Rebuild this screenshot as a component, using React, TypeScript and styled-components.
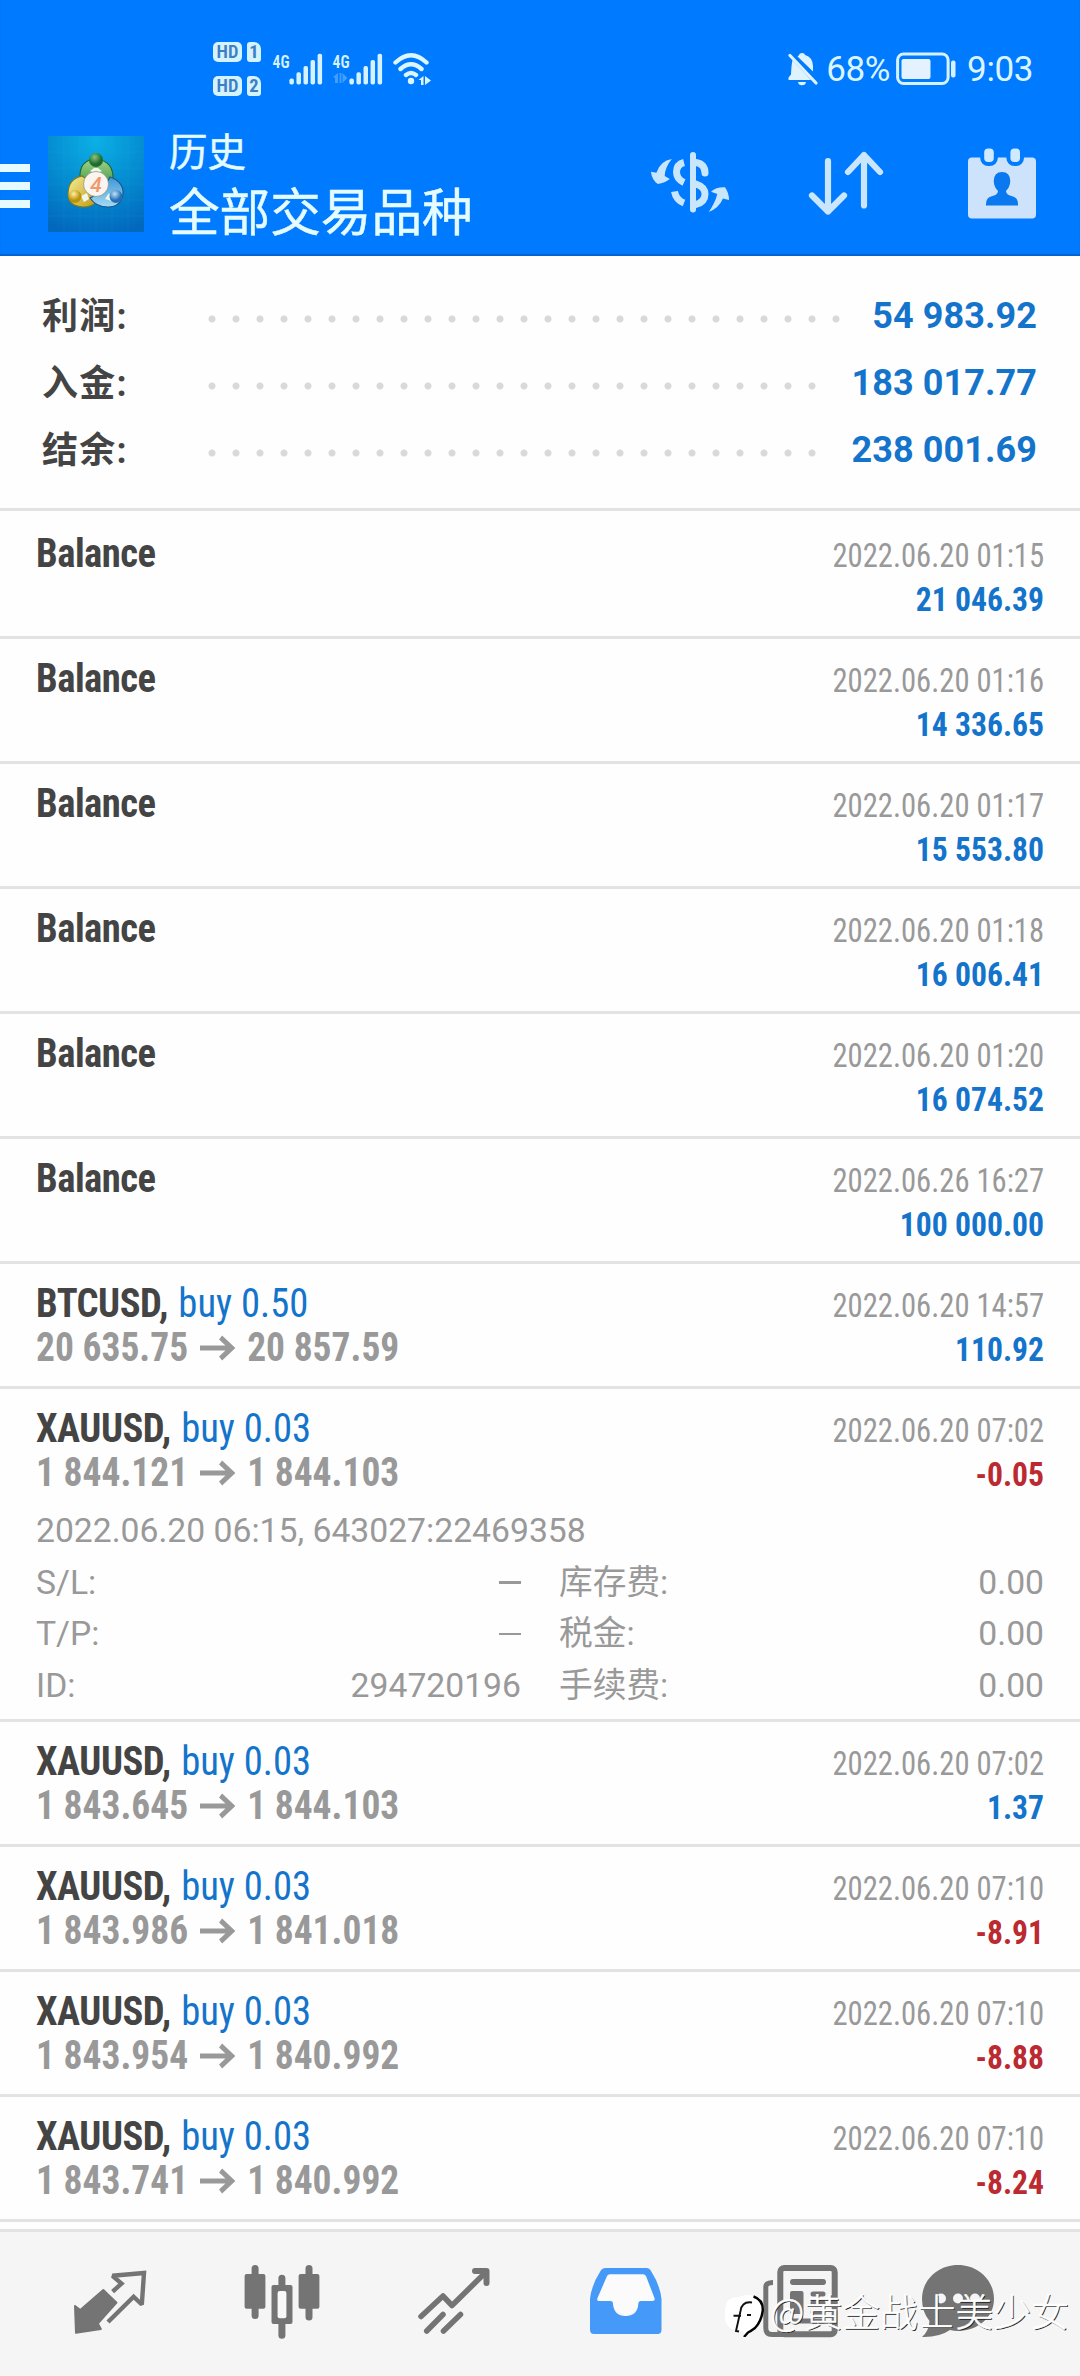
import React from "react";
import styled, { createGlobalStyle } from "styled-components";

const BLUE = "#1474cb";
const RED = "#bb2a30";
const ICE = "#c9e6fd";
const NAV = "#747474";
const CONDENSED = `"Roboto Condensed", Roboto, "Noto Sans CJK SC", sans-serif`;

const GlobalStyle = createGlobalStyle`
  *, *::before, *::after { box-sizing: border-box; }
  body {
    margin: 0;
    background: #fefefe;
    font-family: Roboto, "Noto Sans CJK SC", sans-serif;
  }
  svg { display: block; flex: none; }
`;

const Screen = styled.div`
  position: relative;
  width: 1080px;
  height: 2376px;
  overflow: hidden;
  display: flex;
  flex-direction: column;
  background: #fefefe;
`;

/* ---------- header ---------- */

const Header = styled.header`
  height: 256px;
  flex: none;
  background: #007aff;
  box-shadow: inset 0 -2px 1px rgba(0, 60, 130, 0.35);
`;

const StatusBar = styled.div`
  height: 120px;
  padding: 17px 47px 0 213px;
  display: flex;
  align-items: center;
  color: #dcf4ff;
`;

const SimBadges = styled.div`
  display: grid;
  grid-template-columns: 29px 14px;
  gap: 14px 5px;
  margin-right: 11px;
`;

const Badge = styled.span<{ $sim?: boolean }>`
  height: 20px;
  border-radius: ${(p) => (p.$sim ? "3px 7px 3px 3px" : "5px")};
  background: #d5f2ff;
  color: #3b7fc4;
  font: ${(p) => (p.$sim ? 700 : 600)} 18.5px/20px ${CONDENSED};
  text-align: center;
`;

const Signals = styled.div`
  display: flex;
  gap: 6px;
  margin-right: auto;
`;

const StatusText = styled.span<{ $gap: number }>`
  font-size: 35px;
  line-height: 40px;
  letter-spacing: -0.4px;
  margin-left: ${(p) => p.$gap}px;
  padding-top: 3px;
`;

const BatterySlot = styled.div`
  margin-left: 6px;
`;

const AppBar = styled.div`
  height: 128px;
  padding-right: 40px;
  display: flex;
  align-items: center;
`;

const MenuButton = styled.div`
  width: 30px;
  height: 44px;
  margin: 4px 18px 0 0;
  display: flex;
  flex-direction: column;
  justify-content: space-between;
`;

const MenuLine = styled.i`
  height: 8px;
  background: #e6fbff;
`;

const Titles = styled.div`
  display: flex;
  flex-direction: column;
  gap: 8px;
  margin: 6px auto 0 25px;
  color: #e4fbff;
  -webkit-text-stroke: 0.5px #e4fbff;
`;

const Caption = styled.div`
  font-size: 38.5px;
  line-height: 46px;
`;

const Title = styled.div`
  font-size: 50.6px;
  line-height: 60px;
`;

const Actions = styled.div`
  display: flex;
  align-items: center;
`;

const Action = styled.div<{ $w: number; $gap?: number }>`
  width: ${(p) => p.$w}px;
  margin-left: ${(p) => p.$gap || 0}px;
`;

/* ---------- summary ---------- */

const Summary = styled.section`
  height: 255px;
  flex: none;
  margin-bottom: 3px;
  padding: 27px 43px 0 42px;
  border-bottom: 3px solid #e3e3e3;
`;

const SummaryRow = styled.div`
  height: 67px;
  display: flex;
  align-items: center;
  font-size: 36px;
  line-height: 67px;
  font-weight: 700;
`;

const SummaryLabel = styled.span`
  width: 158px;
  padding-top: 2px;
  color: #444;
  letter-spacing: 1.2px;
`;

const Dots = styled.span<{ $count: number }>`
  width: ${(p) => p.$count * 24}px;
  height: 8px;
  margin-top: 5px;
  background: radial-gradient(circle at 50% 50%, #d9d9d9 3px, transparent 4px) 0 0 / 24px 8px repeat-x;
`;

const SummaryValue = styled.span`
  margin-left: auto;
  color: ${BLUE};
  letter-spacing: 0.1px;
`;

/* ---------- history list ---------- */

const Deal = styled.article<{ $open?: boolean }>`
  height: ${(p) => (p.$open ? 333 : 125)}px;
  flex: none;
  padding: 18px 36px 0;
  border-bottom: 3px solid #e3e3e3;
`;

const DealHead = styled.div`
  display: flex;
  justify-content: space-between;
  font-family: ${CONDENSED};
  line-height: 44px;
`;

const Symbol = styled.div`
  font-size: 40px;
  font-weight: 700;
  color: #444;
  letter-spacing: -0.5px;
  transform: scaleX(0.965);
  transform-origin: left;
`;

const Side = styled.span`
  margin-left: 2px;
  font-weight: 400;
  color: ${BLUE};
  letter-spacing: 0;
`;

const Prices = styled.div`
  display: flex;
  align-items: center;
  gap: 12px;
  font-size: 40px;
  font-weight: 700;
  color: #999;
  transform: scaleX(0.937);
  transform-origin: left;
`;

const Result = styled.div`
  margin-top: 1px;
  text-align: right;
`;

const Time = styled.div`
  font-size: 34px;
  color: #999;
  transform: scaleX(0.9);
  transform-origin: right;
`;

const Amount = styled.div<{ $loss: boolean }>`
  font-size: 34px;
  font-weight: 700;
  color: ${(p) => (p.$loss ? RED : BLUE)};
  transform: scaleX(0.93);
  transform-origin: right;
`;

const Details = styled.div`
  margin-top: 9px;
  display: grid;
  grid-template-columns: 1fr 1fr;
  column-gap: 38px;
  font-size: 33.7px;
  line-height: 51.6px;
  color: #999;
`;

const Ticket = styled.div`
  grid-column: 1 / -1;
`;

const Field = styled.div`
  display: flex;
  align-items: center;
  justify-content: space-between;
`;

const Dash = styled.i`
  width: 22px;
  height: 2.5px;
  background: #999;
`;

/* ---------- bottom navigation ---------- */

const NavBar = styled.nav`
  height: 147px;
  flex: none;
  margin-top: auto;
  padding: 33px 24px 0;
  border-top: 3px solid #e3e3e3;
  background: #f5f5f5;
  display: grid;
  grid-template-columns: repeat(6, 1fr);
  justify-items: center;
`;

const NavItem = styled.div<{ $shift?: number }>`
  margin-left: ${(p) => p.$shift || 0}px;
`;

const Watermark = styled.div`
  position: absolute;
  left: 724px;
  top: 2285px;
  display: flex;
  align-items: center;
  gap: 4px;
  font: 300 37.8px/56px "Noto Sans CJK SC", sans-serif;
  color: #fff;
  text-shadow: 1px 1px 0 #222;
  -webkit-text-stroke: 0.5px #fff;
  white-space: nowrap;
`;

const WatermarkText = styled.span`
  margin-top: -3px;
`;

/* ---------- icons ---------- */

const Cellular = ({ data }: { data?: boolean }) => (
  <svg width="54" height="34" viewBox="0 0 54 34" fill="#d5f2ff">
    <text x="0.6" y="15.5" fontFamily="Roboto Condensed" fontSize="18.5" fontWeight="600" textLength="17" lengthAdjust="spacingAndGlyphs">4G</text>
    {data && <path d="M1 25l5-4v10h-3v-5zM7.500 21h2v10h-2zM10.500 21l5 5-5 5z" opacity="0.3" />}
    {[0, 1, 2, 3, 4].map((i) => (
      <rect key={i} x={17.4 + i * 7.05} y={26.500 - i * 6.2} width="4.5" height={6 + i * 6.2} rx="1.8" />
    ))}
  </svg>
);

const Wifi = () => (
  <svg width="40" height="34" viewBox="0 0 40 34" fill="none" stroke="#dcf6ff" strokeWidth="4.4" strokeLinecap="round">
    <path d="M3.5 10.5Q19 -4 34.500 10.5M8.500 17Q19 7.500 29.500 17M14 23Q19 19 24 23" />
    <circle cx="19" cy="29" r="3.2" fill="#dcf6ff" stroke="none" />
    <path d="M26.500 28l5-4v9h-2.500v-5zM33 24l6 4.500-6 4.500z" fill="#dcf6ff" stroke="none" />
  </svg>
);

const BellOff = () => (
  <svg width="31" height="34" viewBox="0 0 31 34" fill="#dff3ff">
    <path d="M10.500 4.500Q11.500 3.500 12 3Q12.500 1 15 1Q17.500 1 18.200 3Q25.500 5 26 14V19.500z" />
    <path d="M5.500 8L24 28H1.500V25.500L4 22.500Q4.500 12 5.500 8z" />
    <path d="M11 30h8q-.5 3.200-4 3.200t-4-3.200z" />
    <path d="M3 3.500L29 31" stroke="#dff3ff" strokeWidth="3.200" strokeLinecap="round" />
  </svg>
);

const Battery = () => (
  <svg width="60" height="34" viewBox="0 0 60 34">
    <rect x="1.600" y="2" width="50.500" height="29.500" rx="6" fill="none" stroke="#d5f2ff" strokeWidth="3" />
    <rect x="5.500" y="7" width="29" height="20" rx="2" fill="#e4f2ff" />
    <rect x="55" y="8.500" width="4.500" height="17" rx="2" fill="#d5f2ff" />
  </svg>
);

const Logo = () => (
  <svg width="96" height="96" viewBox="0 0 96 96">
    <defs>
      <radialGradient id="sky" cx="50%" cy="5%" r="100%">
        <stop offset="0" stopColor="#0bb0e6" />
        <stop offset="0.55" stopColor="#0489cf" />
        <stop offset="1" stopColor="#0268bd" />
      </radialGradient>
      <linearGradient id="leaf" x2="0" y2="1"><stop stopColor="#a3d38c" /><stop offset="1" stopColor="#278a2c" /></linearGradient>
      <linearGradient id="gold" x2="1" y2="1"><stop stopColor="#f6ee9a" /><stop offset="1" stopColor="#c39a10" /></linearGradient>
      <linearGradient id="aqua" x2="0" y2="1"><stop stopColor="#3e96d6" /><stop offset="1" stopColor="#a5daf5" /></linearGradient>
      <radialGradient id="ballG" cx="40%" cy="30%"><stop stopColor="#8cc47c" /><stop offset="1" stopColor="#1d6b2e" /></radialGradient>
      <radialGradient id="ballY" cx="40%" cy="30%"><stop stopColor="#fff2a0" /><stop offset="1" stopColor="#b9930f" /></radialGradient>
      <radialGradient id="ballB" cx="40%" cy="30%"><stop stopColor="#bfe4fa" /><stop offset="1" stopColor="#246fb5" /></radialGradient>
    </defs>
    <rect width="96" height="96" fill="url(#sky)" />
    <path d="M0 16H96M0 32H96M0 48H96M0 64H96M0 80H96M16 0V96M32 0V96M48 0V96M64 0V96M80 0V96" stroke="#5fd0f5" strokeOpacity="0.08" />
    <path d="M32 42Q31 24 48 23Q66 25 65 44Q63 53 58 56L40 44z" fill="url(#leaf)" stroke="#1c6a35" strokeWidth="1.200" />
    <path d="M34 40Q20 43 20 58Q20 70 35 71Q44 71 48 66L40 44z" fill="url(#gold)" stroke="#7d7a1c" strokeWidth="1.200" />
    <path d="M62 41Q76 46 75 58Q73 71 60 71Q48 71 42 62L54 56z" fill="url(#aqua)" stroke="#1c558c" strokeWidth="1.200" />
    <path d="M42 35L48 38L54 35L50 32H46zM33 60L39 57L41 63L36 66zM57 63L61 57L64 65z" fill="#eef8ea" />
    <circle cx="48" cy="24" r="7" fill="url(#ballG)" />
    <circle cx="27" cy="60.500" r="6.500" fill="url(#ballY)" />
    <circle cx="68" cy="60.500" r="6.500" fill="url(#ballB)" />
    <circle cx="48" cy="48" r="12.500" fill="#fbf4ef" stroke="#7e8f80" strokeWidth="0.700" />
    <text x="48" y="55.500" fontFamily="Roboto" fontStyle="italic" fontWeight="500" fontSize="21" textAnchor="middle" fill="#ee9a6c">4</text>
  </svg>
);

const Currency = () => (
  <svg width="84" height="68" viewBox="0 0 84 68" fill="none" stroke={ICE} strokeWidth="7">
    <path d="M36 12.500Q28.500 14.500 28.500 22Q28.500 29 36 32.500M26.500 41.500Q28 50 36 53" />
    <path d="M48 12.500Q57 14 57 23M48 34Q57 37 57 44Q57 52 48 54.500" strokeLinecap="round" />
    <path d="M45 5v54.500" strokeWidth="6" strokeLinecap="round" />
    <path d="M2.900 21.700L8.400 22.700Q12 11 23.900 9Q17 17 16.700 26L21.800 29Q17 33 9.800 34Q4 30 2.900 21.700z" fill={ICE} stroke="none" />
    <path d="M60.700 62Q67 53 69.300 44L63 41.700Q68 37 77 37.300Q81 43 81 50L75 48.500Q71 58 60.700 62z" fill={ICE} stroke="none" />
  </svg>
);

const Sort = () => (
  <svg width="80" height="68" viewBox="0 0 80 68" fill="none" stroke={ICE} strokeWidth="6.200" strokeLinecap="round" strokeLinejoin="round">
    <path d="M22 11V61.500M6 45.500L22 61.500L38 45.500M58 55.500V5M42 22L58 5L74 22" />
  </svg>
);

const ContactCalendar = () => (
  <svg width="74" height="76" viewBox="0 0 74 76">
    <rect x="2" y="11.500" width="68" height="61" rx="4" fill="#cde3fb" />
    <g fill="#cfeaff" stroke="#007aff" strokeWidth="4">
      <rect x="16.200" y="0.500" width="13.600" height="17.500" rx="6" />
      <rect x="42.400" y="0.500" width="13.600" height="17.500" rx="6" />
    </g>
    <path d="M36 26Q44 26 44.300 35Q44 41 40 45Q40 49 47 50.500Q52.500 52 52 59.500H20Q19.500 52 25 50.500Q32 49 32 45Q28 41 27.700 35Q28 26 36 26z" fill="#0a78ee" />
  </svg>
);

const PriceArrow = () => (
  <svg width="39" height="26" viewBox="0 0 39 26" fill="none" stroke="#999" strokeWidth="5">
    <path d="M1 13H35.500M23 2.500L35 13L23 23.500" />
  </svg>
);

const Quotes = () => (
  <svg width="76" height="76" viewBox="0 0 76 76" fill={NAV}>
    <path d="M31.300 25L44.500 37.700L25.800 58.500L28.800 64L4 67.800L3 41L8.300 45z" stroke={NAV} strokeWidth="2" strokeLinejoin="round" />
    <path d="M40.600 26.700L49.500 18.500L40.500 10.800L72 8L69.800 39.500L61.600 31.700L36 57" fill="none" stroke={NAV} strokeWidth="4.400" strokeLinejoin="miter" strokeMiterlimit="2" />
  </svg>
);

const Candles = () => (
  <svg width="76" height="76" viewBox="0 0 76 76" fill={NAV}>
    <rect x="0.600" y="9" width="20.800" height="34.700" rx="2" />
    <rect x="7.600" y="0" width="7" height="54" rx="3.500" />
    <rect x="54.600" y="9" width="20.800" height="34.700" rx="2" />
    <rect x="61.500" y="0" width="7" height="55.500" rx="3.500" />
    <rect x="34.400" y="9.700" width="7" height="64" rx="3.500" />
    <rect x="27.500" y="20" width="21" height="39" rx="2" />
    <rect x="33.600" y="26" width="8.800" height="27.300" rx="2" fill="#f8f8f8" />
  </svg>
);

const Trade = () => (
  <svg width="76" height="76" viewBox="0 0 76 76" fill="none" stroke={NAV} strokeWidth="5.500" strokeLinecap="round" strokeLinejoin="round">
    <path d="M5 51.500L27 31L36 40.500L70 7" />
    <path d="M59 6H70.500V18" strokeWidth="6" />
    <path d="M10.700 66L27 49.500M27.500 66L44.500 49.500" />
  </svg>
);

const History = () => (
  <svg width="76" height="76" viewBox="0 0 76 76" fill="#4599f8">
    <path d="M21 8H56L68 37H51L50 42L38 53L25 42L24 37H8z" fill="#fbfbfb" />
    <path fillRule="evenodd" d="M18 3H58.500Q61.500 3 63 6Q72 20 73.500 34V64.500Q73.500 69 69.500 69H6Q2 69 2 64.500V34Q3.500 20 12.500 6Q14 3 18 3zM22 9.300Q19.800 9.300 19 11L9.500 33Q8.500 36 11 36H22.500Q25 36 25 39Q26 51 37.500 51Q49.500 51 50.300 39Q50.300 36 53 36H64.500Q67.500 36 66.500 33L58 11Q57 9.300 55 9.300z" />
  </svg>
);

const News = () => (
  <svg width="76" height="76" viewBox="0 0 76 76" fill="none" stroke={NAV}>
    <rect x="18.300" y="3" width="54.400" height="66.300" rx="4" strokeWidth="6" />
    <path d="M11 17.500Q3.800 17.500 3.800 22V63Q3.800 69.500 10 69.500H24" strokeWidth="5" />
    <path d="M31 17H61" strokeWidth="6" strokeLinecap="round" />
    <rect x="28" y="26" width="13.500" height="23" rx="2" fill={NAV} stroke="none" />
    <path d="M51 29H61M51 38H61M51 47H61M31 56H61" strokeWidth="5" strokeLinecap="round" />
  </svg>
);

const Chat = () => (
  <svg width="76" height="76" viewBox="0 0 76 76" fill={NAV}>
    <path d="M38 0C58 0 74 15 74 34C74 52 58 66 38 66Q34 66 30 65Q19 72.500 2 72Q9 66 9.500 56Q2 47 2 34C2 15 18 0 38 0z" />
    <g fill="#f5f5f5">
      <circle cx="21" cy="33.500" r="5" />
      <circle cx="38" cy="33.500" r="5" />
      <circle cx="55" cy="33.500" r="5" />
    </g>
  </svg>
);

const WatermarkLogo = () => (
  <svg width="42" height="50" viewBox="0 0 42 50" fill="none">
    <path d="M14 10Q27 6 34 10Q40 15 39 25Q37 35 30 41L21 48L18 44Q6 44 2 36Q-1 26 3 15Q7 10 14 10z" fill="#fff" />
    <path d="M29.500 9.500Q39.500 13 38.700 24Q37 35 31 41Q27 44 24 45.500L20 50" stroke="#000" strokeWidth="2.400" />
    <path d="M28 15.500Q18 14 16.500 24L12 44L15 44.500M9.500 28.700H17M23 28H27" stroke="#111" strokeWidth="1.900" />
  </svg>
);

/* ---------- data ---------- */

interface DealData {
  symbol: string;
  side?: string;
  prices?: [string, string];
  time: string;
  amount: string;
  open?: boolean;
}

const totals = [
  { label: "利润:", value: "54 983.92", dots: 27 },
  { label: "入金:", value: "183 017.77", dots: 26 },
  { label: "结余:", value: "238 001.69", dots: 26 },
];

const deals: DealData[] = [
  { symbol: "Balance", time: "2022.06.20 01:15", amount: "21 046.39" },
  { symbol: "Balance", time: "2022.06.20 01:16", amount: "14 336.65" },
  { symbol: "Balance", time: "2022.06.20 01:17", amount: "15 553.80" },
  { symbol: "Balance", time: "2022.06.20 01:18", amount: "16 006.41" },
  { symbol: "Balance", time: "2022.06.20 01:20", amount: "16 074.52" },
  { symbol: "Balance", time: "2022.06.26 16:27", amount: "100 000.00" },
  { symbol: "BTCUSD,", side: "buy 0.50", prices: ["20 635.75", "20 857.59"], time: "2022.06.20 14:57", amount: "110.92" },
  { symbol: "XAUUSD,", side: "buy 0.03", prices: ["1 844.121", "1 844.103"], time: "2022.06.20 07:02", amount: "-0.05", open: true },
  { symbol: "XAUUSD,", side: "buy 0.03", prices: ["1 843.645", "1 844.103"], time: "2022.06.20 07:02", amount: "1.37" },
  { symbol: "XAUUSD,", side: "buy 0.03", prices: ["1 843.986", "1 841.018"], time: "2022.06.20 07:10", amount: "-8.91" },
  { symbol: "XAUUSD,", side: "buy 0.03", prices: ["1 843.954", "1 840.992"], time: "2022.06.20 07:10", amount: "-8.88" },
  { symbol: "XAUUSD,", side: "buy 0.03", prices: ["1 843.741", "1 840.992"], time: "2022.06.20 07:10", amount: "-8.24" },
];

const fields: [string, string][] = [
  ["S/L:", ""],
  ["库存费:", "0.00"],
  ["T/P:", ""],
  ["税金:", "0.00"],
  ["ID:", "294720196"],
  ["手续费:", "0.00"],
];

const DealRow = ({ deal }: { deal: DealData }) => (
  <Deal $open={deal.open}>
    <DealHead>
      <div>
        <Symbol>
          {deal.symbol} {deal.side && <Side>{deal.side}</Side>}
        </Symbol>
        {deal.prices && (
          <Prices>
            <span>{deal.prices[0]}</span>
            <PriceArrow />
            <span>{deal.prices[1]}</span>
          </Prices>
        )}
      </div>
      <Result>
        <Time>{deal.time}</Time>
        <Amount $loss={deal.amount.startsWith("-")}>{deal.amount}</Amount>
      </Result>
    </DealHead>
    {deal.open && (
      <Details>
        <Ticket>2022.06.20 06:15, 643027:22469358</Ticket>
        {fields.map(([label, value]) => (
          <Field key={label}>
            <span>{label}</span>
            {value ? <span>{value}</span> : <Dash />}
          </Field>
        ))}
      </Details>
    )}
  </Deal>
);

export default function App() {
  return (
    <Screen>
      <GlobalStyle />
      <Header>
        <StatusBar>
          <SimBadges>
            <Badge>HD</Badge>
            <Badge $sim>1</Badge>
            <Badge>HD</Badge>
            <Badge $sim>2</Badge>
          </SimBadges>
          <Signals>
            <Cellular />
            <Cellular data />
            <Wifi />
          </Signals>
          <BellOff />
          <StatusText $gap={8}>68%</StatusText>
          <BatterySlot>
            <Battery />
          </BatterySlot>
          <StatusText $gap={11}>9:03</StatusText>
        </StatusBar>
        <AppBar>
          <MenuButton>
            <MenuLine />
            <MenuLine />
            <MenuLine />
          </MenuButton>
          <Logo />
          <Titles>
            <Caption>历史</Caption>
            <Title>全部交易品种</Title>
          </Titles>
          <Actions>
            <Action $w={84}><Currency /></Action>
            <Action $w={80} $gap={74}><Sort /></Action>
            <Action $w={74} $gap={80}><ContactCalendar /></Action>
          </Actions>
        </AppBar>
      </Header>

      <Summary>
        {totals.map((t) => (
          <SummaryRow key={t.label}>
            <SummaryLabel>{t.label}</SummaryLabel>
            <Dots $count={t.dots} />
            <SummaryValue>{t.value}</SummaryValue>
          </SummaryRow>
        ))}
      </Summary>

      {deals.map((d, i) => (
        <DealRow key={i} deal={d} />
      ))}

      <NavBar>
        <NavItem><Quotes /></NavItem>
        <NavItem><Candles /></NavItem>
        <NavItem><Trade /></NavItem>
        <NavItem><History /></NavItem>
        <NavItem $shift={4}><News /></NavItem>
        <NavItem $shift={-24}><Chat /></NavItem>
      </NavBar>

      <Watermark>
        <WatermarkLogo />
        <WatermarkText>@黄金战士美少女</WatermarkText>
      </Watermark>
    </Screen>
  );
}
